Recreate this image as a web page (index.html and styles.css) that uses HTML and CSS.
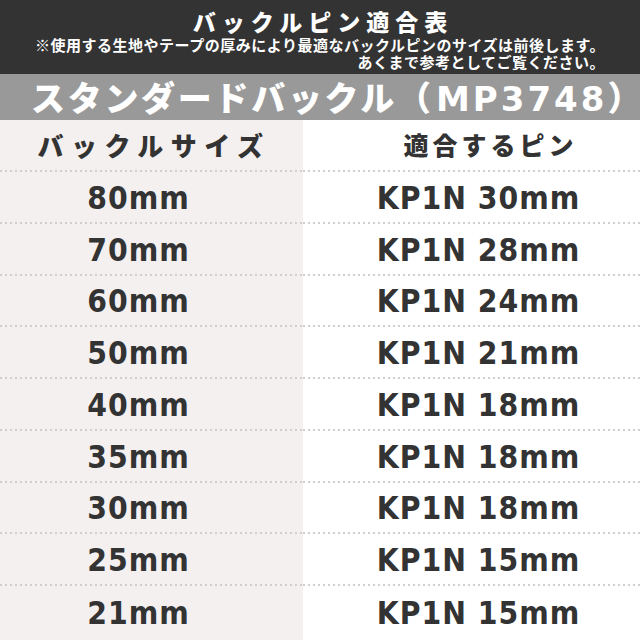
FILE: index.html
```html
<!DOCTYPE html>
<html lang="ja">
<head>
<meta charset="utf-8">
<title>バックルピン適合表</title>
<link rel="stylesheet" href="styles.css">
</head>
<body>
<div class="page">
  <header class="top">
    <h1 class="title">バックルピン適合表</h1>
    <p class="note">※使用する生地やテープの厚みにより最適なバックルピンのサイズは前後します。<br>あくまで参考としてご覧ください。</p>
  </header>
  <div class="band">スタンダードバックル<span class="paren open">（</span><span class="code">MP3748</span><span class="paren close">）</span></div>
  <div class="table">
    <div class="cell left head">バックルサイズ</div>
    <div class="cell right head">適合するピン</div>
    <div class="cell left">80mm</div><div class="cell right">KP1N 30mm</div>
    <div class="cell left">70mm</div><div class="cell right">KP1N 28mm</div>
    <div class="cell left">60mm</div><div class="cell right">KP1N 24mm</div>
    <div class="cell left">50mm</div><div class="cell right">KP1N 21mm</div>
    <div class="cell left">40mm</div><div class="cell right">KP1N 18mm</div>
    <div class="cell left">35mm</div><div class="cell right">KP1N 18mm</div>
    <div class="cell left">30mm</div><div class="cell right">KP1N 18mm</div>
    <div class="cell left">25mm</div><div class="cell right">KP1N 15mm</div>
    <div class="cell left last">21mm</div><div class="cell right last">KP1N 15mm</div>
  </div>
</div>
</body>
</html>
```
FILE: styles.css
```css
* { box-sizing: border-box; }
html, body { margin: 0; padding: 0; }
body {
  width: 640px;
  height: 640px;
  overflow: hidden;
  background: #fff;
  font-family: "Noto Sans CJK JP", sans-serif;
  color: #333;
}
.page {
  display: flex;
  flex-direction: column;
  height: 640px;
}
.top {
  height: 74px;
  background: #333333;
  color: #fff;
  padding-top: 6px;
}
.title {
  margin: 0;
  text-align: center;
  font-size: 23px;
  font-weight: 900;
  line-height: 30px;
  letter-spacing: 6px;
  padding-left: 6px;
}
.note {
  margin: 0;
  text-align: right;
  padding-right: 35px;
  font-size: 15px;
  font-weight: 700;
  line-height: 17px;
  letter-spacing: 0.5px;
}
.band {
  height: 46px;
  background: #999999;
  color: #fff;
  font-family: "Noto Sans CJK JP", sans-serif;
  font-size: 34px;
  font-weight: 900;
  line-height: 46px;
  letter-spacing: 2.7px;
  padding-left: 31px;
  white-space: nowrap;
}
.band .paren.open {
  letter-spacing: 5px;
}
.band .paren.close {
  letter-spacing: -16px;
}
.band .code {
  font-family: "DejaVu Sans", sans-serif;
  font-weight: 700;
  letter-spacing: 3px;
}
.table {
  flex: 1;
  display: grid;
  grid-template-columns: 303px 1fr;
  grid-template-rows: 52px repeat(8, 51.75px) 1fr;
}
.cell {
  display: flex;
  align-items: center;
  justify-content: center;
  font-family: "DejaVu Sans Condensed", "DejaVu Sans", sans-serif;
  font-stretch: condensed;
  font-weight: 700;
  font-size: 31.5px;
  letter-spacing: 1px;
  color: #333;
  white-space: nowrap;
  background: repeating-linear-gradient(90deg, #cfcfcf 0 2px, transparent 2px 5px) left bottom / 100% 2px no-repeat;
}
.cell.left {
  background-color: #f4f0f0;
  padding-right: 26px;
}
.cell.right {
  background-color: #fff;
  padding-left: 14px;
}
.cell.last {
  background-image: none;
}
.cell.head {
  font-family: "Noto Sans CJK JP", sans-serif;
  font-stretch: normal;
  font-size: 25px;
  font-weight: 900;
  padding-bottom: 4px;
}
.cell.left.head {
  font-size: 26px;
  letter-spacing: 7.5px;
  padding-right: 0;
  padding-left: 5px;
}
.cell.right.head {
  letter-spacing: 4px;
  padding-left: 38px;
}
```
